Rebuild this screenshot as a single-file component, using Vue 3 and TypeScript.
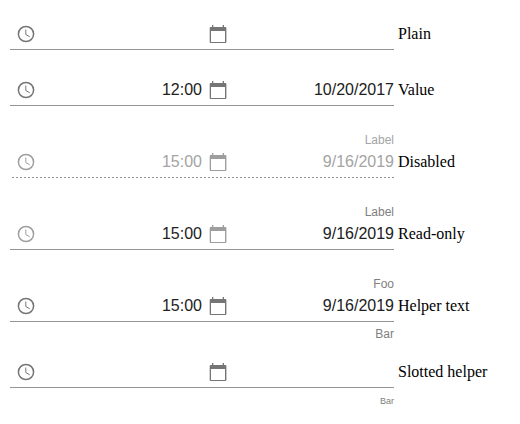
<script setup lang="ts">
interface PickerRow {
  caption: string
  state: 'plain' | 'disabled' | 'readonly'
  time?: string
  date?: string
  label?: string
  helper?: string
  slotted?: boolean
}

const rows: PickerRow[] = [
  { caption: 'Plain', state: 'plain' },
  { caption: 'Value', state: 'plain', time: '12:00', date: '10/20/2017' },
  { caption: 'Disabled', state: 'disabled', time: '15:00', date: '9/16/2019', label: 'Label' },
  { caption: 'Read-only', state: 'readonly', time: '15:00', date: '9/16/2019', label: 'Label' },
  { caption: 'Helper text', state: 'plain', time: '15:00', date: '9/16/2019', label: 'Foo', helper: 'Bar' },
  { caption: 'Slotted helper', state: 'plain', helper: 'Bar', slotted: true },
]
</script>

<template>
  <main class="page">
    <section v-for="row in rows" :key="row.caption" class="row" :class="row.state">
      <div class="picker">
        <div v-if="row.label" class="label">{{ row.label }}</div>
        <div class="inputs">
          <div class="field">
            <svg class="icon" viewBox="0 0 20 20">
              <circle cx="10" cy="10" r="7.6" fill="none" stroke="currentColor" stroke-width="1.5" />
              <path d="M9.8 5.5V10.5L13.7 12.8" fill="none" stroke="currentColor" stroke-width="1" />
            </svg>
            <span class="value">{{ row.time }}</span>
          </div>
          <div class="field">
            <svg class="icon" viewBox="0 0 20 20">
              <path d="M4 1h1.3v2h9.4V1H16v2h1.3q1.1 0 1.1 1.1v13.8q0 1.1-1.1 1.1H2.8q-1.1 0-1.1-1.1V4.1Q1.7 3 2.8 3H4zM3 7v11h14V7z" fill="currentColor" fill-rule="evenodd" />
            </svg>
            <span class="value">{{ row.date }}</span>
          </div>
        </div>
        <div v-if="row.helper" class="helper" :class="{ slotted: row.slotted }">{{ row.helper }}</div>
      </div>
      <span class="caption" :class="{ lowered: row.label }">{{ row.caption }}</span>
    </section>
  </main>
</template>

<style>
body {
  background: #fff;
}
</style>

<style scoped>
.page {
  padding: 2px 10px 0;
}
.row {
  display: flex;
  align-items: flex-start;
  gap: 4px;
  padding: 16px 0 8px;
}
.picker {
  width: 384px;
  font-family: "Liberation Sans", Arial, sans-serif;
  text-align: right;
}
.label {
  box-sizing: border-box;
  height: 16px;
  padding-top: 4px;
  font-size: 12px;
  line-height: 12px;
  color: #808080;
}
.inputs {
  display: flex;
}
.field {
  box-sizing: border-box;
  display: flex;
  justify-content: space-between;
  width: 192px;
  height: 32px;
  padding: 6px 0 0 6px;
  border-bottom: 1px solid #949494;
}
.icon {
  width: 20px;
  height: 20px;
  color: #757575;
}
.value {
  font-size: 16px;
  line-height: 20px;
  color: #212121;
}
.helper {
  height: 10px;
  padding-top: 6px;
  font-size: 12px;
  line-height: 12px;
  color: #808080;
}
.helper.slotted {
  padding-top: 7px;
  font-size: 9px;
}
.row:has(.helper) {
  padding-bottom: 2px;
}
.caption {
  padding-top: 6px;
  font-family: "Liberation Serif", "Times New Roman", serif;
  font-size: 16px;
  line-height: 20px;
  color: #000;
}
.caption.lowered {
  padding-top: 22px;
}
.disabled .label,
.disabled .value {
  color: #a4a4a4;
}
.disabled .icon,
.readonly .icon {
  color: #9e9e9e;
}
.disabled .field {
  border-bottom: 0;
  background: repeating-linear-gradient(90deg, transparent 0 2px, #949494 2px 4px) left bottom / 100% 1px no-repeat;
}
</style>
